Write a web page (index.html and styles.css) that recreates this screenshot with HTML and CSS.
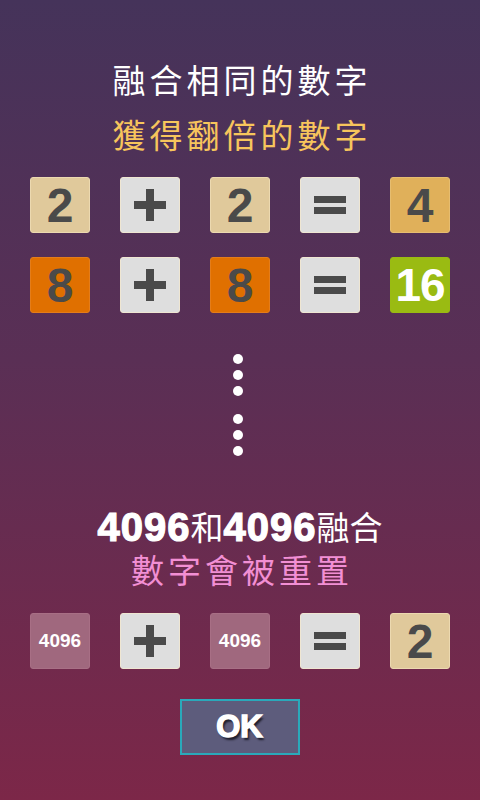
FILE: index.html
```html
<!DOCTYPE html>
<html>
<head>
<meta charset="utf-8">
<link rel="stylesheet" href="styles.css">
</head>
<body>
<div class="screen">
  <div class="title">
    <div class="line white">融合相同的數字</div>
    <div class="line gold">獲得翻倍的數字</div>
  </div>

  <div class="row r1">
    <div class="tile t2">2</div>
    <div class="tile op"><svg width="32" height="32" viewBox="0 0 32 32"><rect x="0" y="12" width="32" height="8" fill="#4a4a4a"/><rect x="12" y="0" width="8" height="32" fill="#4a4a4a"/></svg></div>
    <div class="tile t2">2</div>
    <div class="tile op"><svg width="32" height="20" viewBox="0 0 32 20"><rect x="0" y="1" width="32" height="7" fill="#4a4a4a"/><rect x="0" y="12" width="32" height="7" fill="#4a4a4a"/></svg></div>
    <div class="tile t4">4</div>
  </div>

  <div class="row r2">
    <div class="tile t8">8</div>
    <div class="tile op"><svg width="32" height="32" viewBox="0 0 32 32"><rect x="0" y="12" width="32" height="8" fill="#4a4a4a"/><rect x="12" y="0" width="8" height="32" fill="#4a4a4a"/></svg></div>
    <div class="tile t8">8</div>
    <div class="tile op"><svg width="32" height="20" viewBox="0 0 32 20"><rect x="0" y="1" width="32" height="7" fill="#4a4a4a"/><rect x="0" y="12" width="32" height="7" fill="#4a4a4a"/></svg></div>
    <div class="tile t16">16</div>
  </div>

  <div class="dots">
    <div class="group"><span class="dot"></span><span class="dot"></span><span class="dot"></span></div>
    <div class="group"><span class="dot"></span><span class="dot"></span><span class="dot"></span></div>
  </div>

  <div class="reset">
    <div class="rline white"><span class="num">4096</span>和<span class="num">4096</span>融合</div>
    <div class="rline pink">數字會被重置</div>
  </div>

  <div class="row r3">
    <div class="tile t4096">4096</div>
    <div class="tile op"><svg width="32" height="32" viewBox="0 0 32 32"><rect x="0" y="12" width="32" height="8" fill="#4a4a4a"/><rect x="12" y="0" width="8" height="32" fill="#4a4a4a"/></svg></div>
    <div class="tile t4096">4096</div>
    <div class="tile op"><svg width="32" height="20" viewBox="0 0 32 20"><rect x="0" y="1" width="32" height="7" fill="#4a4a4a"/><rect x="0" y="12" width="32" height="7" fill="#4a4a4a"/></svg></div>
    <div class="tile t2">2</div>
  </div>

  <div class="okwrap">
    <div class="ok">OK</div>
  </div>
</div>
</body>
</html>
```
FILE: styles.css
```css
html, body {
  margin: 0;
  padding: 0;
}
body {
  width: 480px;
  height: 800px;
  overflow: hidden;
  background: linear-gradient(to bottom, #45335a 0%, #5a2f55 45%, #7c2748 100%);
  font-family: "Noto Sans CJK TC", "Liberation Sans", sans-serif;
}
.screen {
  display: flex;
  flex-direction: column;
  align-items: center;
  width: 480px;
  height: 800px;
}
.title {
  padding-top: 52px;
  display: flex;
  flex-direction: column;
  align-items: center;
}
.line {
  font-size: 33px;
  line-height: 55px;
  height: 55px;
  letter-spacing: 4px;
  padding-left: 4px;
  font-weight: 400;
}
.white { color: #ffffff; }
.gold { color: #f7c55c; }
.pink { color: #f28fd4; }

.row {
  display: flex;
  gap: 30px;
}
.r1 { margin-top: 15px; }
.r2 { margin-top: 24px; }
.r3 { margin-top: 22px; }

.tile {
  width: 60px;
  height: 56px;
  box-sizing: border-box;
  border-radius: 3px;
  border: 1px solid rgba(255, 235, 200, 0.45);
  display: flex;
  align-items: center;
  justify-content: center;
  font-family: "Liberation Sans", Arial, sans-serif;
  font-weight: bold;
  font-size: 48px;
  color: #4a4a4a;
}
.t2 { background: #e0c99b; border-color: #ecd9b0; }
.op { background: #dedede; border-color: #efe6d2; }
.t4 { background: #e0b05a; border-color: #e6bd70; }
.t8 { background: #e07000; border-color: #e47d1a; }
.t16 { background: #9abb12; border-color: #9abb12; color: #ffffff; font-size: 46px; letter-spacing: -1px; }
.t4096 {
  background: #a0687e;
  border-color: #a86f85;
  color: #ffffff;
  font-size: 19px;
}

.dots {
  margin-top: 41px;
  display: flex;
  flex-direction: column;
  align-items: center;
  gap: 18px;
}
.group {
  display: flex;
  flex-direction: column;
  gap: 6px;
}
.dot {
  display: block;
  width: 10px;
  height: 10px;
  border-radius: 50%;
  background: #ffffff;
  margin-left: -4px;
}

.reset {
  margin-top: 49px;
  display: flex;
  flex-direction: column;
  align-items: center;
}
.rline {
  font-size: 33px;
  line-height: 43px;
  height: 43px;
  white-space: nowrap;
}
.rline.white {
  display: flex;
  align-items: center;
  letter-spacing: 0px;
}
.rline.pink {
  letter-spacing: 4px;
  padding-left: 4px;
}
.num {
  font-family: "Liberation Sans", Arial, sans-serif;
  font-weight: bold;
  font-size: 40px;
  line-height: 40px;
  letter-spacing: 1px;
  -webkit-text-stroke: 1.2px #ffffff;
}

.okwrap {
  margin-top: 30px;
}
.ok {
  width: 120px;
  height: 56px;
  box-sizing: border-box;
  border: 2px solid #2aa9ba;
  background: #5d5c7c;
  display: flex;
  align-items: center;
  justify-content: center;
  font-family: "Liberation Sans", Arial, sans-serif;
  font-weight: bold;
  font-size: 31px;
  color: #ffffff;
  -webkit-text-stroke: 1.5px #ffffff;
  text-shadow: 2px 3px 2px rgba(20, 20, 30, 0.85);
  margin-left: -1px;
}
```
